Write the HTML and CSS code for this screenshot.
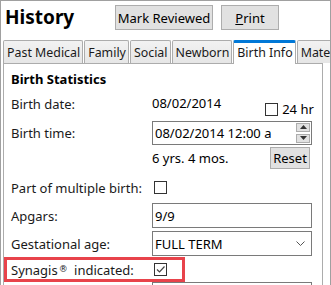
FILE: index.html
```html
<!DOCTYPE html>
<html>
<head>
  <title>History</title>
  <link rel="stylesheet" href="styles.css">
</head>
<body>
  <div class="window">

    <header class="top">
      <h1>History</h1>
      <button class="btn btn-review">Mark Reviewed</button>
      <button class="btn btn-print"><u>P</u>rint</button>
    </header>

    <div class="tabs">
      <div class="tab">Past Medical</div>
      <div class="tab">Family</div>
      <div class="tab">Social</div>
      <div class="tab">Newborn</div>
      <div class="tab active">Birth Info</div>
      <div class="tab">Maternal</div>
    </div>

    <div class="panel">
      <h2>Birth Statistics</h2>

      <div class="row row-date">
        <span class="label">Birth date:</span>
        <span class="value">08/02/2014</span>
        <span class="hr24"><span class="check"></span>24 hr</span>
      </div>

      <div class="row row-time">
        <span class="label">Birth time:</span>
        <div class="field">
          <span class="field-text">08/02/2014 12:00 a</span>
          <div class="spin">
            <span class="spin-btn"><svg width="7" height="4" viewBox="0 0 7 4"><path d="M0 4 L3.5 0 L7 4 Z" fill="#333"/></svg></span>
            <span class="spin-btn"><svg width="7" height="4" viewBox="0 0 7 4"><path d="M0 0 L3.5 4 L7 0 Z" fill="#333"/></svg></span>
          </div>
        </div>
      </div>

      <div class="row row-age">
        <span class="label"></span>
        <span class="value">6 yrs. 4 mos.</span>
        <button class="btn btn-reset">Reset</button>
      </div>

      <div class="row row-multi">
        <span class="label">Part of multiple birth:</span>
        <span class="check"></span>
      </div>

      <div class="row row-field">
        <span class="label">Apgars:</span>
        <div class="field"><span class="field-text">9/9</span></div>
      </div>

      <div class="row row-field row-gest">
        <span class="label">Gestational age:</span>
        <div class="field">
          <span class="field-text">FULL TERM</span>
          <svg class="chevron" width="9" height="5" viewBox="0 0 9 5"><path d="M0.5 0.5 L4.5 4.5 L8.5 0.5" fill="none" stroke="#555" stroke-width="1"/></svg>
        </div>
      </div>

      <div class="row row-synagis">
        <span class="label">Synagis<span class="reg">®</span> indicated:</span>
        <span class="check checked"><svg width="11" height="11" viewBox="0 0 11 11"><path d="M2 5.5 L4.5 8 L9.5 2.5" fill="none" stroke="#444" stroke-width="1.2"/></svg></span>
      </div>

      <div class="row row-next">
        <span class="label"></span>
        <div class="field"></div>
      </div>
    </div>

  </div>
</body>
</html>
```

FILE: styles.css
```css
body {
  margin: 0;
  padding: 0;
  background-color: #fff;
  font-family: "Noto Sans", sans-serif;
  font-size: 13px;
  color: #1a1a1a;
}

.window {
  width: 331px;
  height: 285px;
  box-sizing: border-box;
  border: 1px solid #a0a0a0;
  border-bottom: none;
  overflow: hidden;
}

.top {
  display: flex;
  align-items: flex-start;
  height: 39px;
  padding: 4px 0 0 4px;
  box-sizing: border-box;
}

.top h1 {
  margin: 0;
  width: 110px;
  font-size: 19px;
  line-height: 24px;
  font-weight: bold;
  color: #000;
}

.btn {
  font-family: "Noto Sans", sans-serif;
  font-size: 13px;
  color: #000;
  background-color: #e1e1e1;
  border: 1px solid #adadad;
  padding: 0;
  margin: 0;
  height: 25px;
}

.btn-review {
  width: 98px;
}

.btn-print {
  width: 58px;
  margin-left: 8px;
}

.tabs {
  display: flex;
  gap: 1px;
  height: 23px;
  padding-left: 2px;
  position: relative;
  z-index: 1;
}

.tab {
  flex: none;
  height: 23px;
  box-sizing: border-box;
  padding: 4px 2px 0 3px;
  font-size: 12.4px;
  line-height: 16px;
  border: 1px solid #acacac;
  border-bottom: none;
  border-radius: 2px 2px 0 0;
  background: linear-gradient(#f2f2f2, #e6e6e6);
  white-space: nowrap;
}

.tab.active {
  height: 24px;
  background: #fff;
  border-top: 3px solid #0078d7;
  padding-top: 2px;
}

.panel {
  margin-left: 2px;
  width: 320px;
  height: 230px;
  box-sizing: border-box;
  border: 1px solid #acacac;
  border-bottom: none;
  padding: 0 0 0 7px;
}

.panel h2 {
  margin: 0;
  padding-top: 7px;
  font-size: 13px;
  line-height: 16px;
  font-weight: bold;
  color: #000;
}

.row {
  display: flex;
  align-items: center;
}

.label {
  flex: none;
  width: 141px;
  line-height: 16px;
}

.reg {
  font-family: "DejaVu Sans", sans-serif;
  font-size: 9px;
  color: #1a1a1a;
  vertical-align: 3px;
  margin: 0 3px 0 1px;
}

.value {
  line-height: 16px;
  color: #000;
}

.row-date {
  height: 25px;
  margin-top: 8px;
  align-items: flex-start;
}

.row-date .label {
  margin-top: 1px;
}

.hr24 {
  display: flex;
  align-items: center;
  margin-left: 44px;
  margin-top: 6px;
  line-height: 16px;
  color: #000;
}

.hr24 .check {
  margin: 0 4px 0 0;
}

.check {
  flex: none;
  width: 13px;
  height: 13px;
  box-sizing: border-box;
  border: 1px solid #333;
  background: #fff;
  margin-left: 2px;
  display: flex;
  align-items: center;
  justify-content: center;
}

.row-time {
  height: 25px;
}

.field {
  flex: none;
  width: 160px;
  height: 24px;
  box-sizing: border-box;
  border: 1px solid #7a7a7a;
  display: flex;
  align-items: center;
  padding-left: 2px;
  color: #000;
}

.field-text {
  flex: 1;
  line-height: 16px;
}

.spin {
  display: flex;
  flex-direction: column;
  gap: 2px;
  margin-right: 1px;
}

.spin-btn {
  width: 14px;
  height: 9px;
  box-sizing: border-box;
  background: #e1e1e1;
  border: 1px solid #adadad;
  display: flex;
  align-items: center;
  justify-content: center;
}

.row-age {
  height: 26px;
}

.btn-reset {
  width: 40px;
  height: 22px;
  margin-left: auto;
  margin-right: 12px;
}

.row-multi {
  height: 31px;
  margin-top: 1px;
}

.row-field {
  height: 25px;
}

.row-field .field {
  height: 25px;
}

.row-gest {
  margin-top: 3px;
}

.chevron {
  margin-right: 6px;
}

.row-synagis {
  width: 181px;
  height: 25px;
  box-sizing: border-box;
  margin-left: -7px;
  margin-top: 1px;
  border: 3px solid #e8434b;
  padding-left: 4px;
}

.row-next {
  margin-top: 0;
}
```
